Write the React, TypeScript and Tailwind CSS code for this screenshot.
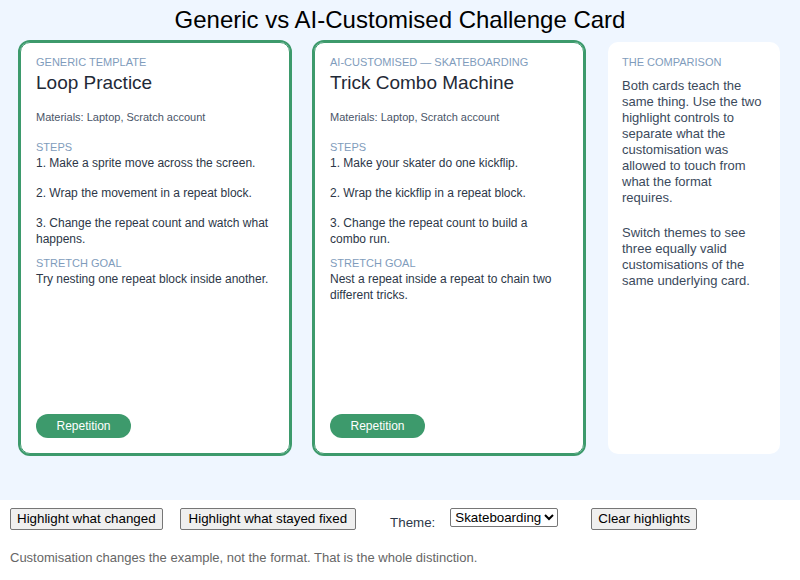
import React, { useState } from 'react';

type Card = {
  label: string;
  title: string;
  materials: string;
  steps: string[];
  stretch: string;
  concept: string;
};

const GENERIC: Card = {
  label: 'Generic template',
  title: 'Loop Practice',
  materials: 'Materials: Laptop, Scratch account',
  steps: [
    '1. Make a sprite move across the screen.',
    '2. Wrap the movement in a repeat block.',
    '3. Change the repeat count and watch what happens.',
  ],
  stretch: 'Try nesting one repeat block inside another.',
  concept: 'Repetition',
};

const CUSTOM: Card = {
  label: 'AI-customised — Skateboarding',
  title: 'Trick Combo Machine',
  materials: 'Materials: Laptop, Scratch account',
  steps: [
    '1. Make your skater do one kickflip.',
    '2. Wrap the kickflip in a repeat block.',
    '3. Change the repeat count to build a combo run.',
  ],
  stretch: 'Nest a repeat inside a repeat to chain two different tricks.',
  concept: 'Repetition',
};

function ChallengeCard({ card }: { card: Card }) {
  return (
    <div className="flex flex-col rounded-[10px] border border-[#3d9a6c] bg-white pl-[15px] pr-[19px] pt-[11px] pb-[15px] outline-2 outline-[#3d9a6c]">
      <p className="text-[11px] leading-4 uppercase text-[#7f9cbc]">{card.label}</p>
      <h2 className="mt-[1px] text-[19px] leading-6 text-[#1f2a37]">{card.title}</h2>
      <p className="mt-[14px] text-[11px] leading-4 text-[#4a5568]">{card.materials}</p>

      <p className="mt-[14px] text-[11px] leading-4 uppercase text-[#7f9cbc]">Steps</p>
      <div className="flex flex-col gap-[14px]">
        {card.steps.map((s) => (
          <p key={s} className="text-[12px] leading-4 text-[#2d3748]">
            {s}
          </p>
        ))}
      </div>

      <p className="mt-[8px] text-[11px] leading-4 uppercase text-[#7f9cbc]">Stretch goal</p>
      <p className="text-[12px] leading-4 text-[#2d3748]">{card.stretch}</p>

      <div className="mt-auto">
        <span className="inline-flex h-[24px] w-[95px] items-center justify-center rounded-full bg-[#3d9a6c] text-[12px] text-white">
          {card.concept}
        </span>
      </div>
    </div>
  );
}

export default function App() {
  const [theme, setTheme] = useState('Skateboarding');

  return (
    <div className="min-h-[580px] bg-white font-['Liberation_Sans',Arial,sans-serif]">
      {/* Comparison area */}
      <div className="h-[500px] bg-[#eff6ff] px-[20px] pt-[6px]">
        <h1 className="text-center text-[24px] leading-[28px] text-black">
          Generic vs AI-Customised Challenge Card
        </h1>
        <div className="mt-[8px] grid h-[412px] grid-cols-[270px_270px_172px] gap-[24px]">
          <ChallengeCard card={GENERIC} />
          <ChallengeCard card={CUSTOM} />
          <div className="rounded-[10px] bg-white pl-[14px] pr-[17px] pt-[12px]">
            <p className="text-[11px] leading-4 uppercase text-[#7f9cbc]">The comparison</p>
            <p className="mt-[8px] text-[13px] leading-4 text-[#3b4a5c]">
              Both cards teach the same thing. Use the two highlight controls to separate what the
              customisation was allowed to touch from what the format requires.
            </p>
            <p className="mt-[19px] text-[13px] leading-4 text-[#3b4a5c]">
              Switch themes to see three equally valid customisations of the same underlying card.
            </p>
          </div>
        </div>
      </div>

      {/* Controls */}
      <div className="flex items-start px-[10px] pt-[8px] text-[13.33px] text-black">
        <button className="h-[22px] rounded-[2px] border border-[#767676] bg-[#efefef] px-[6px]">
          Highlight what changed
        </button>
        <button className="ml-[17px] h-[22px] rounded-[2px] border border-[#767676] bg-[#efefef] px-[8px]">
          Highlight what stayed fixed
        </button>
        <label className="ml-[34px] mt-[5px] text-[#2d3748]">Theme:</label>
        <select
          value={theme}
          onChange={(e) => setTheme(e.target.value)}
          className="ml-[15px] h-[19px] rounded-[2px] border border-[#767676] bg-white text-[13.33px]"
        >
          <option>Skateboarding</option>
          <option>Cooking</option>
          <option>Football</option>
        </select>
        <button className="ml-[33px] h-[22px] rounded-[2px] border border-[#767676] bg-[#efefef] px-[6px]">
          Clear highlights
        </button>
      </div>

      <p className="mt-[17px] px-[10px] text-[13px] leading-4 text-[#666]">
        Customisation changes the example, not the format. That is the whole distinction.
      </p>
    </div>
  );
}
